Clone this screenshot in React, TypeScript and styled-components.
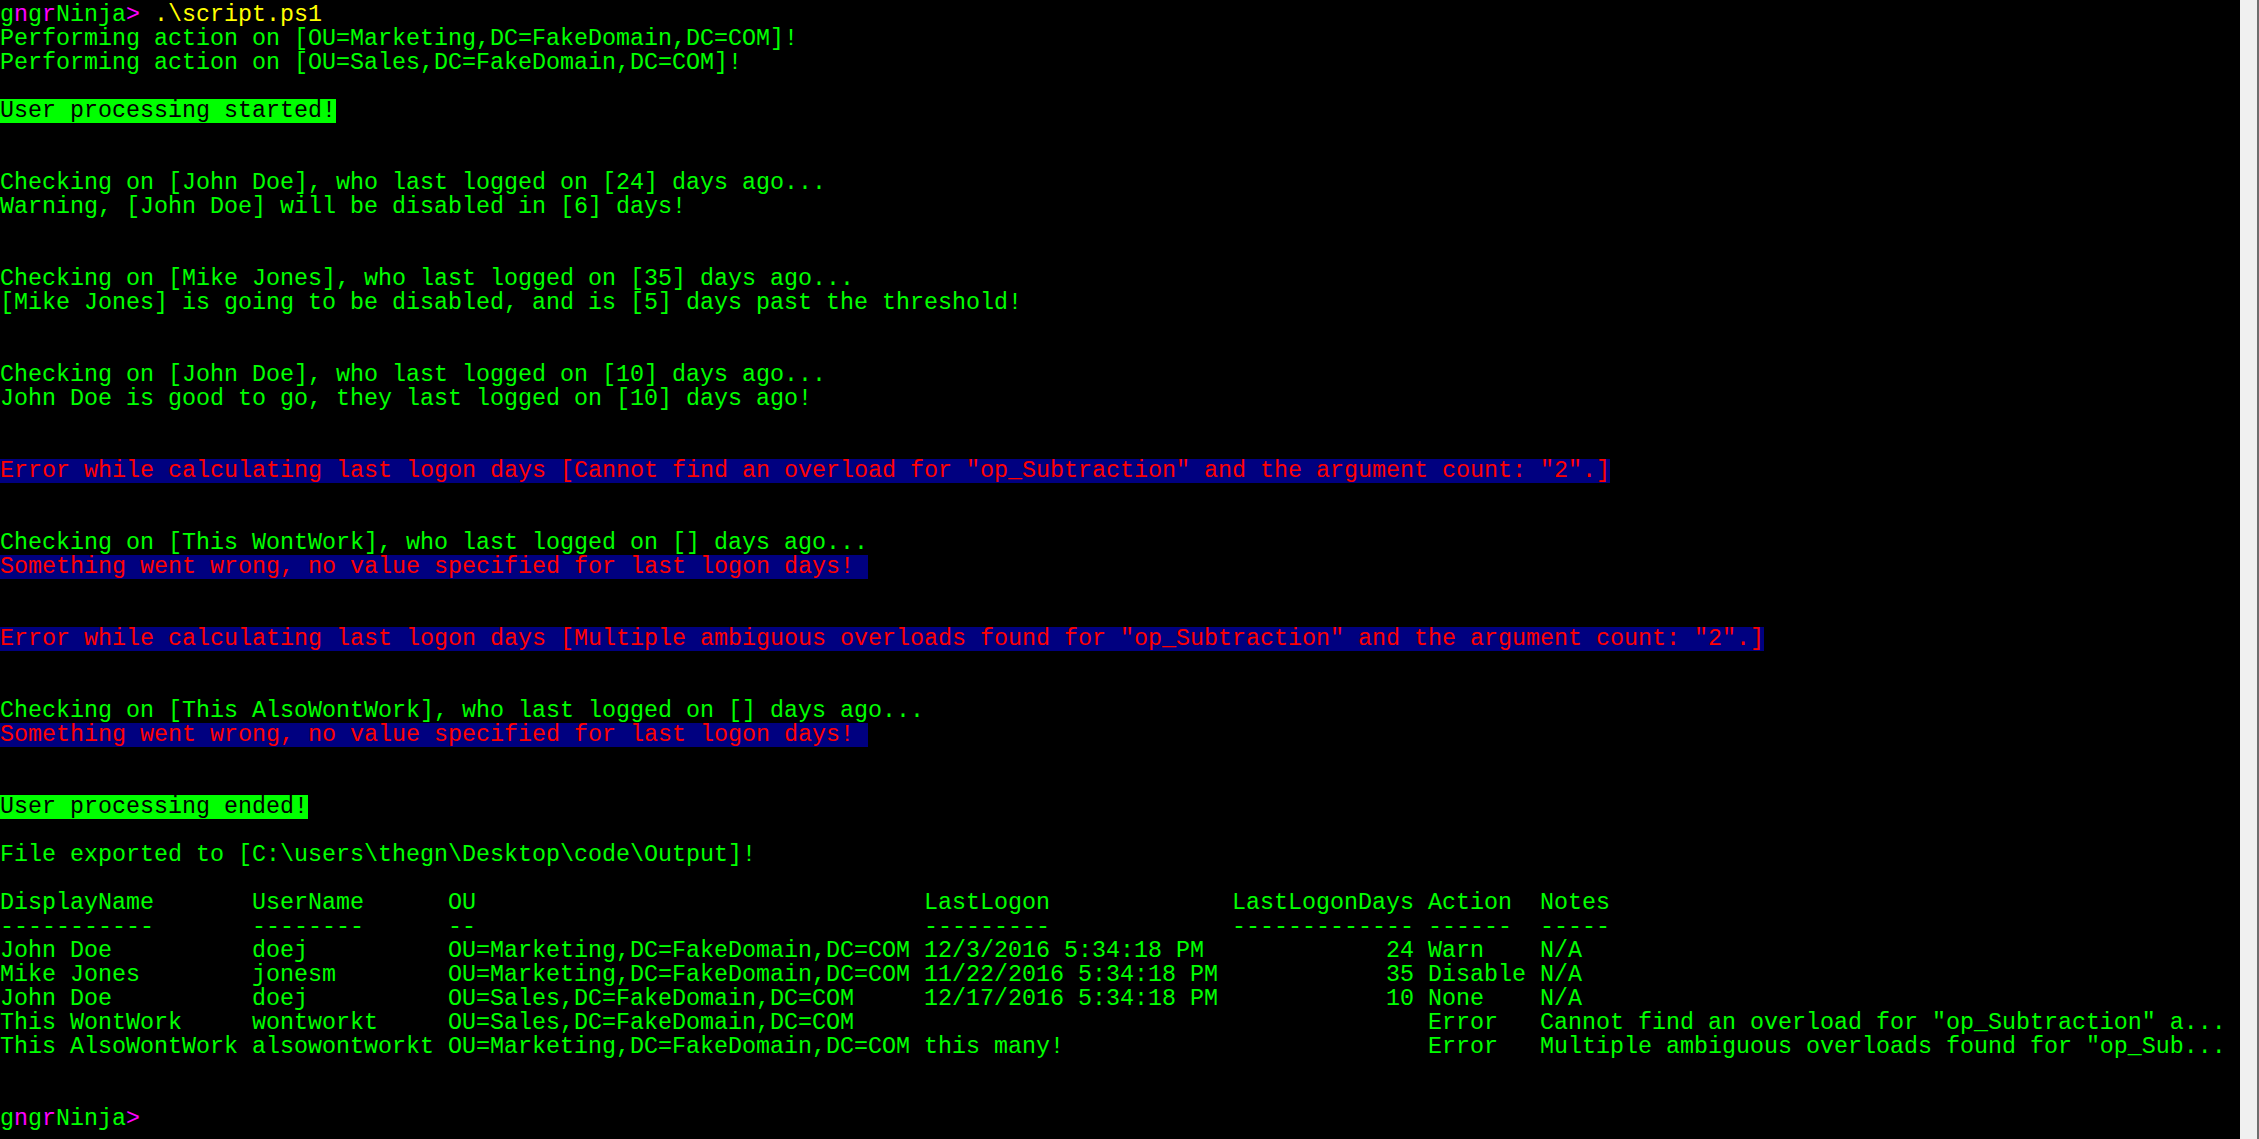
import React from "react";
import styled, { createGlobalStyle } from "styled-components";

const GlobalStyle = createGlobalStyle`
  html, body {
    margin: 0;
    padding: 0;
    background: #000;
    overflow: hidden;
  }
  #root {
    height: 100vh;
  }
`;

const Window = styled.div`
  display: flex;
  width: 100vw;
  height: 100vh;
  background: #000;
`;

const Console = styled.div`
  flex: 1;
  min-width: 0;
  padding-top: 3px;
  overflow: hidden;
  font-family: "Liberation Mono", "DejaVu Sans Mono", monospace;
  font-size: 23.33px;
  line-height: 24px;
  color: #00ff00;
`;

const Scrollbar = styled.div`
  flex: 0 0 17px;
  background: #f0f0f0;
  border-right: 2px solid #6e6e6e;
`;

const Line = styled.div`
  height: 24px;
  white-space: pre;
`;

const Seg = styled.span<{ $fg?: string; $bg?: string }>`
  display: inline-block;
  height: 24px;
  vertical-align: top;
  color: ${(p) => p.$fg ?? "inherit"};
  background: ${(p) => p.$bg ?? "transparent"};
`;

const GREEN = "#00ff00";
const MAGENTA = "#ff00ff";
const YELLOW = "#ffff00";
const RED = "#ff0000";
const NAVY = "#000080";

type Part = { t: string; fg?: string; bg?: string };
type Row = Part[] | string;

const Prompt: React.FC<{ cmd?: string }> = ({ cmd }) => (
  <Line>
    <Seg $fg={GREEN}>g</Seg>
    <Seg $fg={MAGENTA}>n</Seg>
    <Seg $fg={GREEN}>g</Seg>
    <Seg $fg={MAGENTA}>r</Seg>
    <Seg $fg={GREEN}>Ninja</Seg>
    <Seg $fg={MAGENTA}>&gt;</Seg>
    {cmd && <Seg $fg={YELLOW}>{" " + cmd}</Seg>}
  </Line>
);

const widths = [18, 14, 34, 22, 14, 8];
const table: string[][] = [
  ["DisplayName", "UserName", "OU", "LastLogon", "LastLogonDays", "Action", "Notes"],
  ["-----------", "--------", "--", "---------", "-------------", "------", "-----"],
  ["John Doe", "doej", "OU=Marketing,DC=FakeDomain,DC=COM", "12/3/2016 5:34:18 PM", "24", "Warn", "N/A"],
  ["Mike Jones", "jonesm", "OU=Marketing,DC=FakeDomain,DC=COM", "11/22/2016 5:34:18 PM", "35", "Disable", "N/A"],
  ["John Doe", "doej", "OU=Sales,DC=FakeDomain,DC=COM", "12/17/2016 5:34:18 PM", "10", "None", "N/A"],
  ["This WontWork", "wontworkt", "OU=Sales,DC=FakeDomain,DC=COM", "", "", "Error", 'Cannot find an overload for "op_Subtraction" a...'],
  ["This AlsoWontWork", "alsowontworkt", "OU=Marketing,DC=FakeDomain,DC=COM", "this many!", "", "Error", 'Multiple ambiguous overloads found for "op_Sub...'],
];

const formatRow = (cells: string[], idx: number) =>
  cells
    .map((c, i) => {
      if (i === 6) return c;
      if (i === 4 && idx > 1) return c.padStart(13) + " ";
      return c.padEnd(widths[i]);
    })
    .join("")
    .replace(/\s+$/, "");

const output: Row[] = [
  "Performing action on [OU=Marketing,DC=FakeDomain,DC=COM]!",
  "Performing action on [OU=Sales,DC=FakeDomain,DC=COM]!",
  "",
  [{ t: "User processing started!", fg: "#000", bg: GREEN }],
  "",
  "",
  "Checking on [John Doe], who last logged on [24] days ago...",
  "Warning, [John Doe] will be disabled in [6] days!",
  "",
  "",
  "Checking on [Mike Jones], who last logged on [35] days ago...",
  "[Mike Jones] is going to be disabled, and is [5] days past the threshold!",
  "",
  "",
  "Checking on [John Doe], who last logged on [10] days ago...",
  "John Doe is good to go, they last logged on [10] days ago!",
  "",
  "",
  [{ t: 'Error while calculating last logon days [Cannot find an overload for "op_Subtraction" and the argument count: "2".]', fg: RED, bg: NAVY }],
  "",
  "",
  "Checking on [This WontWork], who last logged on [] days ago...",
  [{ t: "Something went wrong, no value specified for last logon days! ", fg: RED, bg: NAVY }],
  "",
  "",
  [{ t: 'Error while calculating last logon days [Multiple ambiguous overloads found for "op_Subtraction" and the argument count: "2".]', fg: RED, bg: NAVY }],
  "",
  "",
  "Checking on [This AlsoWontWork], who last logged on [] days ago...",
  [{ t: "Something went wrong, no value specified for last logon days! ", fg: RED, bg: NAVY }],
  "",
  "",
  [{ t: "User processing ended!", fg: "#000", bg: GREEN }],
  "",
  "File exported to [C:\\users\\thegn\\Desktop\\code\\Output]!",
  "",
  ...table.map((r, i) => formatRow(r, i)),
  "",
  "",
];

export default function App() {
  return (
    <>
      <GlobalStyle />
      <Window>
        <Console>
          <Prompt cmd=".\script.ps1" />
          {output.map((row, i) =>
            typeof row === "string" ? (
              <Line key={i}>{row}</Line>
            ) : (
              <Line key={i}>
                {row.map((p, j) => (
                  <Seg key={j} $fg={p.fg} $bg={p.bg}>
                    {p.t}
                  </Seg>
                ))}
              </Line>
            )
          )}
          <Prompt />
        </Console>
        <Scrollbar />
      </Window>
    </>
  );
}
